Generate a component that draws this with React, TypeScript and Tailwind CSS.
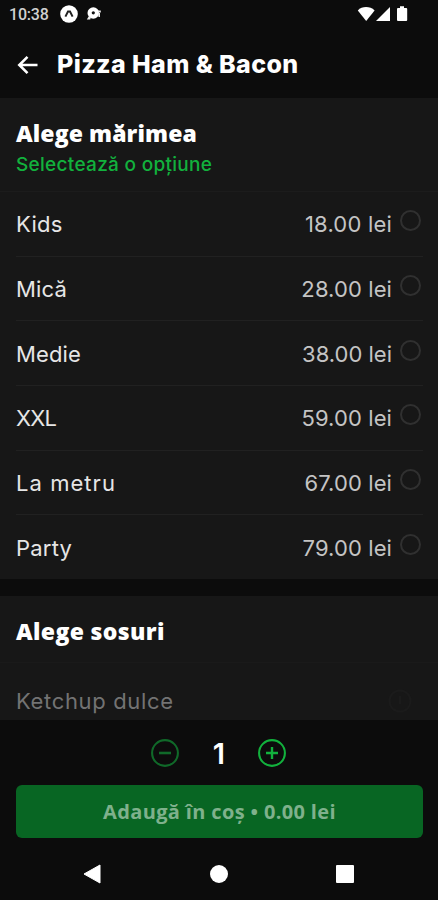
import { useState } from 'react';

const sizes = [
  { name: 'Kids', price: '18.00 lei', nameClass: 'tracking-[0.3px]', priceClass: 'tracking-[0.2px]' },
  { name: 'Mică', price: '28.00 lei', nameClass: 'tracking-[0.2px]', priceClass: 'tracking-[0.1px]' },
  { name: 'Medie', price: '38.00 lei', nameClass: 'tracking-[0.1px]', priceClass: 'tracking-[0px]' },
  { name: 'XXL', price: '59.00 lei', nameClass: 'tracking-[-0.8px]', priceClass: 'tracking-[0.1px]' },
  { name: 'La metru', price: '67.00 lei', nameClass: 'tracking-[1.05px]', priceClass: 'tracking-[0.1px]' },
  { name: 'Party', price: '79.00 lei', nameClass: 'tracking-[0.2px]', priceClass: 'tracking-[0.1px]' },
];

function StatusBar() {
  return (
    <div className="h-7 shrink-0 flex items-center justify-between pl-[9px] pr-[29px]">
      <div className="flex items-center">
        <span className="w-[51px] pt-0.5 text-[16px] leading-none font-medium tracking-[-0.2px] text-[#d0d0d0] font-['Roboto',sans-serif]">
          10:38
        </span>
        <svg width="18" height="18" viewBox="0 0 18 18">
          <circle cx="9" cy="9" r="8.8" fill="#fff" />
          <path d="M5.4 11.6 8 6.6h2l2.6 5" fill="none" stroke="#222" strokeWidth="2" />
        </svg>
        <svg className="ml-2" width="16" height="14" viewBox="0 0 16 14">
          <circle cx="7.3" cy="6" r="5.8" fill="#fff" />
          <circle cx="7.3" cy="5.8" r="1.6" fill="#111" />
          <path d="M3 9 .8 12.6h3.4L5 10zM12 3.6h2.8v1.8H12zM12 6h2v4h-1.5z" fill="#eee" />
        </svg>
      </div>
      <svg width="52" height="18" viewBox="0 0 52 18">
        <path d="M.8 5.4C5 1 13 1 17.6 5.4L9.2 16z" fill="#fff" />
        <path d="M33 2v14H19z" fill="#fff" />
        <path d="M41 3h2V1.3h4V3h2.2q1 0 1 1v11q0 1-1 1H41q-1 0-1-1V4q0-1 1-1z" fill="#fff" />
      </svg>
    </div>
  );
}

export default function App() {
  const [selected, setSelected] = useState('');
  const [quantity, setQuantity] = useState(1);

  return (
    <div className="w-[438px] h-[900px] flex flex-col overflow-hidden bg-[#0c0c0c] text-white font-['Inter',sans-serif]">
      <StatusBar />

      {/* Header */}
      <header className="h-[70px] shrink-0 flex items-center pl-[17px]">
        <button aria-label="Înapoi">
          <svg width="22" height="20" viewBox="0 0 22 20" className="mt-1" fill="none" stroke="#fff" strokeWidth="2.6">
            <path d="M20.5 10H2.5M10.5 1.8 2.3 10l8.2 8.2" />
          </svg>
        </button>
        <h1 className="ml-[18px] pt-0.5 whitespace-nowrap text-[25px] leading-8 font-extrabold tracking-[0.4px]">
          Pizza Ham &amp; Bacon
        </h1>
      </header>

      {/* Sizes */}
      <section className="h-[481px] shrink-0 flex flex-col bg-[#171717]">
        <div className="h-[94px] shrink-0 px-4 pt-5 border-b border-[#1c1c1c]">
          <h2 className="text-[23px] leading-[30px] font-extrabold tracking-[0.1px] font-['Open_Sans',sans-serif]">
            Alege mărimea
          </h2>
          <p className="text-[19px] leading-[34px] font-medium tracking-[0.3px] text-[#12b13d]">Selectează o opțiune</p>
        </div>
        <ul className="flex-1 flex flex-col pl-4 pr-[15px]">
          {sizes.map((size) => (
            <li
              key={size.name}
              onClick={() => setSelected(size.name)}
              className="flex-1 flex items-center pt-px border-b border-[#212121] last:border-b-0"
            >
              <span className={`flex-1 text-[22px] leading-7 text-[#e6e6e6] ${size.nameClass}`}>{size.name}</span>
              <span className={`text-[22px] leading-7 text-[#c4c4c4] ${size.priceClass}`}>{size.price}</span>
              <span
                className={`ml-2 mr-0.5 mb-[7px] size-[21px] rounded-full border-2 ${
                  selected === size.name ? 'border-[#12b13d]' : 'border-[#303030]'
                }`}
              />
            </li>
          ))}
        </ul>
      </section>

      {/* Sauces */}
      <section className="mt-[17px] h-[124px] shrink-0 overflow-hidden bg-[#171717]">
        <div className="h-[67px] px-4 pt-5 border-b border-[#1a1a1a]">
          <h2 className="text-[23px] leading-[30px] font-extrabold tracking-[0.35px] font-['Open_Sans',sans-serif]">
            Alege sosuri
          </h2>
        </div>
        <div className="h-[76px] pl-4 pr-[26px] flex items-center justify-between">
          <span className="text-[22px] leading-7 tracking-[0.65px] text-[#737373]">Ketchup dulce</span>
          <svg width="24" height="24" viewBox="0 0 24 24" fill="none" stroke="#1b1b1b" strokeWidth="2">
            <circle cx="12" cy="12" r="10.5" />
            <path d="M12 7v8" />
          </svg>
        </div>
      </section>

      {/* Quantity and cart */}
      <footer className="h-[118px] shrink-0 px-4 pr-[15px]">
        <div className="h-[65px] flex items-center justify-center pr-0.5 pt-px">
          <button aria-label="Mai puțin" onClick={() => setQuantity(Math.max(1, quantity - 1))}>
            <svg width="28" height="28" viewBox="0 0 28 28" fill="none" stroke="#106929" strokeWidth="2.1">
              <circle cx="14" cy="14" r="12.9" />
              <path d="M8 14h12" strokeWidth="2.6" />
            </svg>
          </button>
          <span className="w-[79px] pt-px pl-px text-center text-[29px] leading-8 font-semibold">{quantity}</span>
          <button aria-label="Mai mult" onClick={() => setQuantity(quantity + 1)}>
            <svg width="28" height="28" viewBox="0 0 28 28" fill="none" stroke="#12b13d" strokeWidth="2.1">
              <circle cx="14" cy="14" r="12.9" />
              <path d="M8 14h12M14 8v12" strokeWidth="2.4" />
            </svg>
          </button>
        </div>
        <button className="w-full h-[53px] rounded-md bg-[#086623] text-[20px] font-bold tracking-[0.35px] text-[#7fb18c] font-['Open_Sans',sans-serif]">
          Adaugă în coș • 0.00 lei
        </button>
      </footer>

      {/* Android navigation */}
      <nav className="flex-1 flex items-center justify-between pl-[83px] pr-[84px] pt-[9px]">
        <svg width="18" height="20" viewBox="0 0 18 20">
          <path d="M1 10 17 1v18z" fill="#fff" stroke="#fff" strokeLinejoin="round" />
        </svg>
        <span className="size-[18px] rounded-full bg-white" />
        <span className="size-[18px] rounded-[1px] bg-white" />
      </nav>
    </div>
  );
}
